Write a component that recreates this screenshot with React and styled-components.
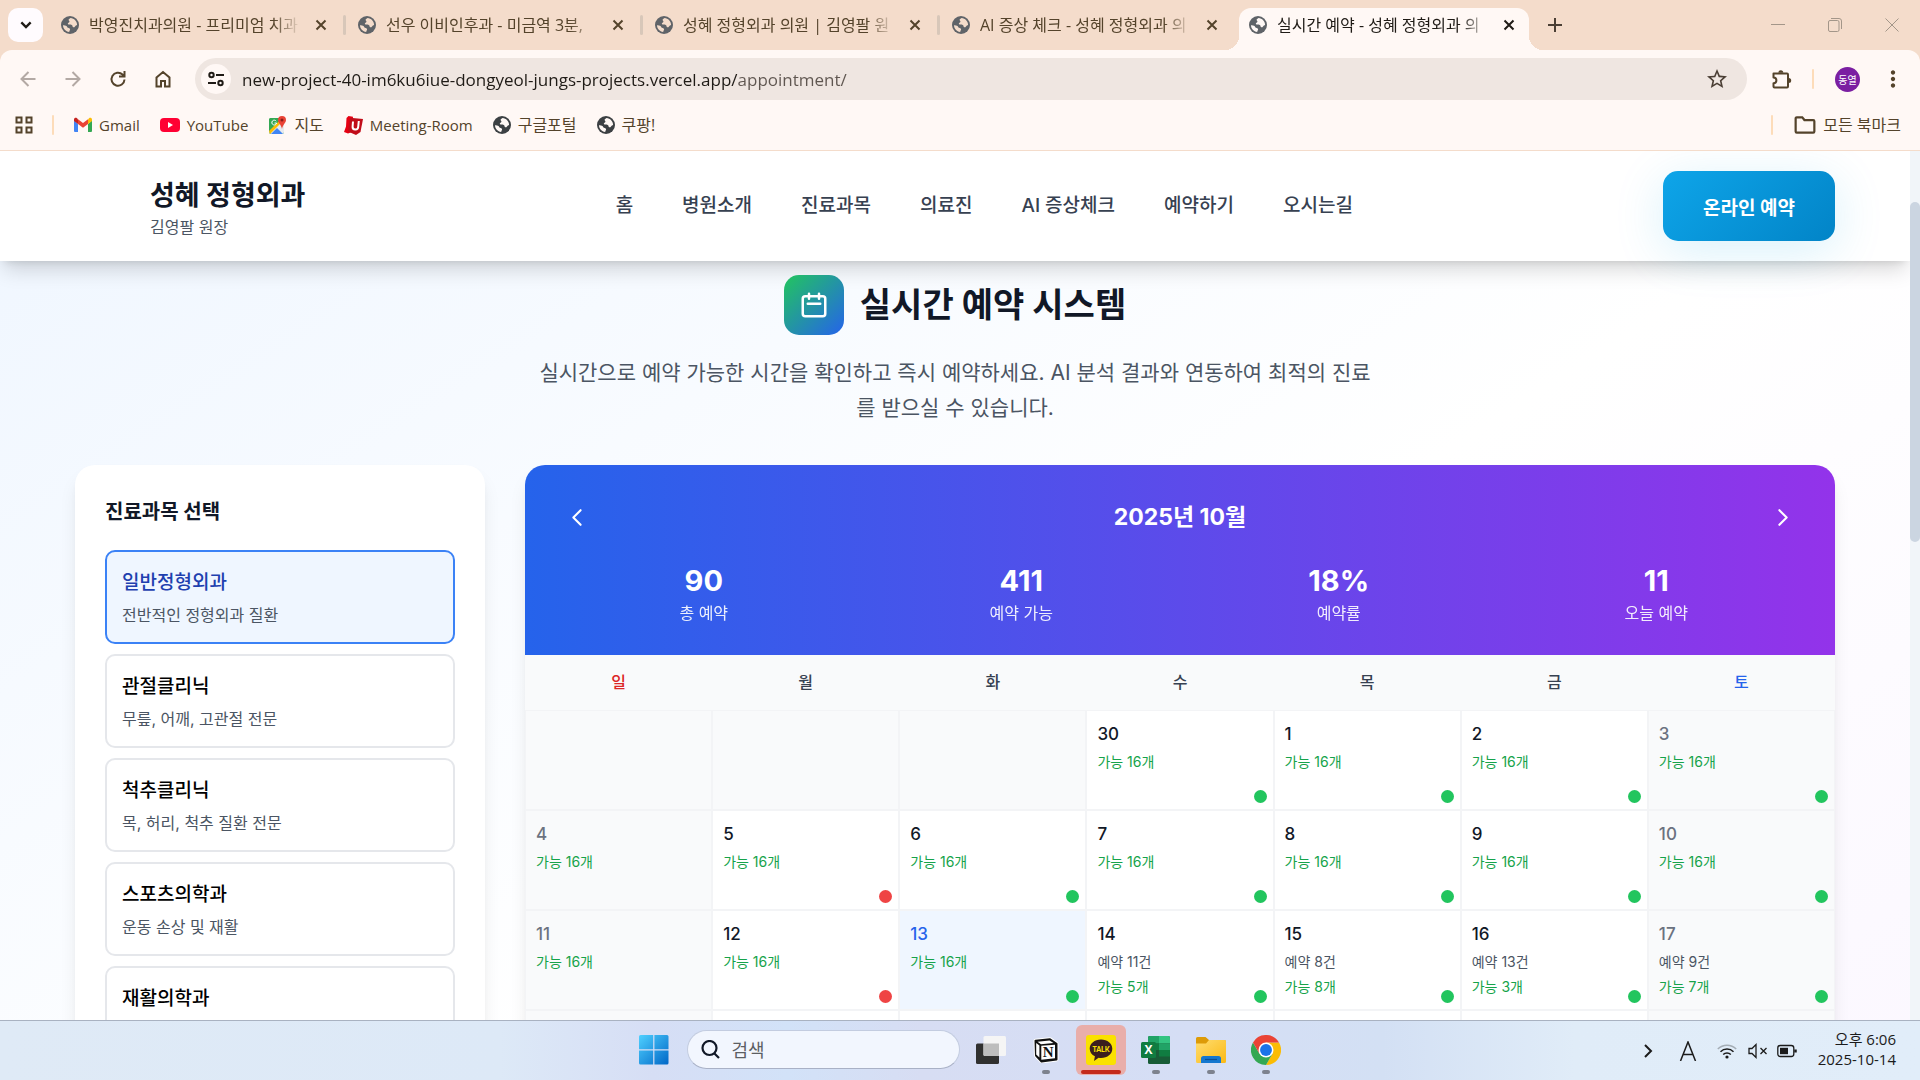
import React from "react";
import styled, { createGlobalStyle, css } from "styled-components";
import { MdStarBorder, MdMoreVert } from "react-icons/md";

const GlobalStyle = createGlobalStyle`
  *, *::before, *::after { box-sizing: border-box; }
  body {
    margin: 0;
    overflow: hidden;
    font-family: Inter, "Noto Sans CJK KR", sans-serif;
    color: #111827;
  }
  button, input { font: inherit; color: inherit; }
  button { border: 0; padding: 0; background: none; cursor: pointer; }
  a { color: inherit; text-decoration: none; }
  h1, h2, p { margin: 0; }
  svg { display: block; flex: none; }
`;

const chromeFont = css`font-family: "Open Sans", "Noto Sans CJK KR", sans-serif;`;

const Screen = styled.div`
  display: flex;
  flex-direction: column;
  height: 100vh;
`;

/* ---------- browser frame ---------- */

const Browser = styled.header`
  ${chromeFont}
  flex: none;
  background: #f4dccb;
`;

const TabStrip = styled.div`
  display: flex;
  align-items: flex-end;
  height: 50px;
  padding-left: 8px;
`;

const TabSearch = styled.button`
  align-self: center;
  display: grid;
  place-items: center;
  width: 35px;
  height: 34px;
  margin-right: 8px;
  border-radius: 10px;
  background: #fffbfe;
  color: #1f1b16;
`;

const Tab = styled.div`
  position: relative;
  display: flex;
  align-items: center;
  width: 290px;
  height: 42px;
  padding: 0 8px 8px 10px;
  border-radius: 12px 12px 0 0;
  font-size: 16px;
  color: ${(p) => (p.$active ? "#1f1b16" : "#54432b")};
  background: ${(p) => (p.$active ? "#fff8f5" : "transparent")};

  ${(p) => p.$active && css`
    &::before, &::after {
      content: "";
      position: absolute;
      bottom: 0;
      width: 14px;
      height: 14px;
    }
    &::before {
      right: 100%;
      background: radial-gradient(circle at 0 0, transparent 14px, #fff8f5 14px);
    }
    &::after {
      left: 100%;
      background: radial-gradient(circle at 100% 0, transparent 14px, #fff8f5 14px);
    }
  `}
`;

const TabTitle = styled.span`
  flex: 1;
  min-width: 0;
  margin: 0 8px 0 10px;
  overflow: hidden;
  white-space: nowrap;
  line-height: 24px;
  mask-image: linear-gradient(to right, #000 calc(100% - 28px), transparent);
`;

const TabClose = styled.button`
  display: grid;
  place-items: center;
  width: 24px;
  height: 24px;
`;

const TabDivider = styled.span`
  align-self: center;
  width: 3px;
  height: 20px;
  margin: 0 2px;
  border-radius: 2px;
  background: ${(p) => (p.$hidden ? "transparent" : "#d8c7b9")};
`;

const NewTab = styled.button`
  align-self: center;
  display: grid;
  place-items: center;
  width: 28px;
  height: 28px;
  margin-left: 12px;
  color: #4b3f35;
`;

const WindowControls = styled.div`
  align-self: center;
  display: flex;
  margin-left: auto;
  color: #a39689;
`;

const WindowButton = styled.button`
  display: grid;
  place-items: center;
  width: 57px;
  height: 40px;
`;

const ToolArea = styled.div`
  border-radius: 12px 12px 0 0;
  border-bottom: 1px solid #f4dccb;
  background: #fff8f5;
`;

const Toolbar = styled.div`
  display: flex;
  align-items: center;
  padding: 8px 5px 0;
`;

const ToolButton = styled.button`
  display: grid;
  place-items: center;
  width: 45px;
  height: 42px;
  color: ${(p) => (p.$muted ? "#b3a9a4" : "#54432b")};
`;

const AddressBar = styled.div`
  display: flex;
  flex: 1;
  align-items: center;
  height: 42px;
  margin: 0 12px 0 10px;
  padding: 0 18px 0 6px;
  border-radius: 21px;
  background: #efe6e1;
  color: #4b3f35;
`;

const SiteInfo = styled.button`
  display: grid;
  place-items: center;
  width: 30px;
  height: 30px;
  border-radius: 50%;
  background: #fff8f5;
  color: #1f1b16;
`;

const AddressInput = styled.input`
  flex: 1;
  min-width: 0;
  height: 30px;
  margin-left: 11px;
  padding: 0;
  border: 0;
  outline: 0;
  font-size: 17px;
  color: transparent;
  background: linear-gradient(to right, #1f1b16 495px, #5f5650 495px);
  background-clip: text;
`;

const Divider = styled.span`
  width: 2px;
  height: 20px;
  border-radius: 1px;
  background: #fddcb9;
  margin: ${(p) => p.$margin};
`;

const Avatar = styled.span`
  display: grid;
  place-items: center;
  width: 25px;
  height: 25px;
  border-radius: 50%;
  background: #7b1fa2;
  color: #fff;
  font-size: 10px;
`;

const BookmarkBar = styled.nav`
  display: flex;
  align-items: center;
  height: 50px;
  padding: 0 19px 0 15px;
  color: #54432b;
`;

const BookmarkList = styled.div`
  display: flex;
  flex: 1;
  gap: 20px;
`;

const Bookmark = styled.a`
  display: flex;
  align-items: center;
  gap: 7px;
  line-height: 24px;
  font-size: ${(p) => (p.$latin ? 15 : 16)}px;
  white-space: nowrap;
`;

/* ---------- clinic page ---------- */

const Viewport = styled.div`
  display: flex;
  flex: 1;
  min-height: 0;
`;

const Page = styled.div`
  flex: 1;
  min-width: 0;
  overflow: hidden;
  background: #faf5ff linear-gradient(to bottom right, #eff6ff, #ffffff, #faf5ff) 0 0 / 100% 1240px no-repeat;
`;

const ScrollTrack = styled.div`
  width: 10px;
  padding-top: 51px;
  background: #f1f5f9;
`;

const ScrollThumb = styled.div`
  height: 340px;
  border-radius: 5px;
  background: #cbd5e1;
`;

const SiteHeader = styled.div`
  background: #fff;
  box-shadow: 0 12px 20px -4px rgba(0, 0, 0, 0.16), 0 5px 8px -5px rgba(0, 0, 0, 0.12);
`;

const Container = styled.div`
  max-width: 1910px;
  margin: 0 auto;
  padding: 0 75px;
`;

const HeaderRow = styled(Container)`
  display: flex;
  align-items: center;
  justify-content: space-between;
  height: 110px;
`;

const Brand = styled.a`
  padding: 4px 0 0 75px;
  display: flex;
  flex-direction: column;
`;

const BrandName = styled.span`
  font-size: 27px;
  font-weight: 700;
  line-height: 38px;
`;

const BrandSub = styled.span`
  font-size: 16px;
  line-height: 25px;
  color: #4b5563;
`;

const SiteNav = styled.nav`
  display: flex;
  gap: 49px;
  font-size: 19px;
  font-weight: 500;
  line-height: 28px;
  color: #374151;
`;

const ReserveButton = styled.button`
  height: 70px;
  padding: 0 40px;
  border-radius: 15px;
  background: linear-gradient(135deg, #0ea5e9, #0284c7);
  box-shadow: 0 10px 50px rgba(14, 165, 233, 0.16);
  color: #fff;
  font-size: 19px;
  font-weight: 700;
`;

const Intro = styled.section`
  display: flex;
  flex-direction: column;
  align-items: center;
  gap: 20px;
  padding: 14px 0 40px;
`;

const IntroTitle = styled.h1`
  display: flex;
  align-items: center;
  gap: 16px;
  font-size: 34px;
  font-weight: 700;
  line-height: 60px;
`;

const IntroIcon = styled.span`
  display: grid;
  place-items: center;
  width: 60px;
  height: 60px;
  border-radius: 15px;
  background: linear-gradient(135deg, #22c55e, #2563eb);
  color: #fff;
`;

const IntroText = styled.p`
  max-width: 840px;
  font-size: 21px;
  line-height: 35px;
  text-align: center;
  color: #4b5563;
`;

const Columns = styled.div`
  display: grid;
  grid-template-columns: 410px minmax(0, 1fr);
  gap: 40px;
  align-items: start;
`;

const Card = styled.section`
  overflow: hidden;
  border-radius: 20px;
  background: #fff;
  box-shadow: 0 12px 20px -4px rgba(0, 0, 0, 0.1), 0 5px 8px -5px rgba(0, 0, 0, 0.1);
`;

const DepartmentCard = styled(Card)`
  padding: 30px;
`;

const CardTitle = styled.h2`
  margin-bottom: 20px;
  font-size: 20px;
  font-weight: 700;
  line-height: 35px;
`;

const DepartmentList = styled.div`
  display: flex;
  flex-direction: column;
  gap: 10px;
`;

const Department = styled.button`
  display: flex;
  flex-direction: column;
  gap: 5px;
  padding: 16px 15px 14px;
  border: 2px solid ${(p) => (p.$selected ? "#3b82f6" : "#e5e7eb")};
  border-radius: 10px;
  background: ${(p) => (p.$selected ? "#eff6ff" : "#fff")};
  color: ${(p) => (p.$selected ? "#1e40af" : "#000")};
  text-align: left;
`;

const DepartmentName = styled.span`
  font-size: 19px;
  font-weight: 500;
  line-height: 30px;
`;

const DepartmentNote = styled.span`
  font-size: 16px;
  line-height: 25px;
  color: #4b5563;
`;

const CalendarHead = styled.div`
  padding: 30px 30px 29px;
  background: linear-gradient(to right, #2563eb, #9333ea);
  color: #fff;
`;

const MonthRow = styled.div`
  display: flex;
  align-items: center;
  justify-content: space-between;
  margin-bottom: 21px;
`;

const MonthTitle = styled.h2`
  font-size: 23px;
  font-weight: 700;
  line-height: 35px;
`;

const MonthButton = styled.button`
  padding: 10px;
  border-radius: 10px;
`;

const Stats = styled.div`
  display: grid;
  grid-template-columns: repeat(4, 1fr);
  gap: 20px;
  text-align: center;
`;

const StatValue = styled.div`
  font-size: 29px;
  font-weight: 700;
  line-height: 40px;
`;

const StatLabel = styled.div`
  font-size: 16px;
  line-height: 25px;
  opacity: 0.9;
`;

const CalendarTable = styled.table`
  width: 100%;
  table-layout: fixed;
  border-collapse: separate;
  border-spacing: 0;
`;

const weekdayColors = { sun: "#dc2626", sat: "#2563eb" };

const Weekday = styled.th`
  height: 55px;
  padding: 0 0 3px;
  background: #f9fafb;
  font-size: 16px;
  font-weight: 500;
  color: ${(p) => weekdayColors[p.$kind] || "#374151"};
`;

const DayCell = styled.td`
  position: relative;
  height: 100px;
  padding: 11px 10px 0;
  border: 1px solid #f3f4f6;
  vertical-align: top;
  background: ${(p) => (p.$today ? "#eff6ff" : p.$muted ? "#f9fafb" : "#fff")};
`;

const DayNumber = styled.div`
  font-size: 17px;
  font-weight: 500;
  line-height: 25px;
  color: ${(p) => (p.$today ? "#2563eb" : p.$muted ? "#6b7280" : "#111827")};
`;

const DayLine = styled.div`
  margin-top: 4px;
  font-size: 14px;
  line-height: 21px;
  color: ${(p) => (p.$booked ? "#4b5563" : "#16a34a")};
`;

const StatusDot = styled.span`
  position: absolute;
  right: 6px;
  bottom: 6px;
  width: 13px;
  height: 13px;
  border-radius: 50%;
  background: ${(p) => (p.$color === "red" ? "#ef4444" : "#22c55e")};
`;

/* ---------- taskbar ---------- */

const Taskbar = styled.footer`
  ${chromeFont}
  display: grid;
  grid-template-columns: 1fr auto 1fr;
  flex: none;
  height: 60px;
  border-top: 1px solid #a9b2c1;
  background: linear-gradient(to right, #dfeaf6 0%, #dde9f7 26%, #d6def5 34%, #d2e2f8 41%, #d7ddf3 48%, #d5def5 62%, #d3e0f4 72%, #e0ecf8 82%, #e1edf9 100%);
`;

const TaskCenter = styled.div`
  grid-column: 2;
  display: flex;
  align-items: center;
  padding-bottom: 2px;
`;

const TaskSlot = styled.button`
  position: relative;
  display: grid;
  place-items: center;
  width: 55px;
  height: 57px;

  &::after {
    content: "";
    position: absolute;
    bottom: 4px;
    width: ${(p) => (p.$alert ? 40 : 8)}px;
    height: 4px;
    border-radius: 2px;
    background: ${(p) => (p.$alert ? "#c42b1c" : p.$running ? "#7d828e" : "transparent")};
  }
`;

const AlertTile = styled.span`
  display: grid;
  place-items: center;
  width: 50px;
  height: 50px;
  border-radius: 6px;
  background: #e9aeaa;
`;

const TaskSearch = styled.label`
  display: flex;
  align-items: center;
  gap: 12px;
  width: 273px;
  height: 39px;
  margin: 0 4px 0 5px;
  padding: 0 13px;
  border: 1px solid #c3cce0;
  border-bottom-color: #a9b1c6;
  border-radius: 20px;
  background: #f2f6fe;
`;

const TaskSearchInput = styled.input`
  flex: 1;
  min-width: 0;
  padding: 0;
  border: 0;
  outline: 0;
  background: none;
  font-size: 18px;

  &::placeholder { color: #5c5e63; opacity: 1; }
`;

const Tray = styled.div`
  display: flex;
  align-items: center;
  justify-content: flex-end;
  padding-right: 24px;
  color: #1b1b1b;
`;

const TrayButton = styled.button`
  display: grid;
  place-items: center;
  width: ${(p) => p.$width}px;
  height: 48px;
`;

const Clock = styled.div`
  margin-left: 14px;
  padding-bottom: 4px;
  font-size: 15px;
  line-height: 20px;
  text-align: right;
`;

/* ---------- drawings ---------- */

const Stroke = ({ size = 20, box = 24, width = 2, children, ...rest }) => (
  <svg width={size} height={size} viewBox={`0 0 ${box} ${box}`} fill="none" stroke="currentColor" strokeWidth={width} aria-hidden="true" {...rest}>
    {children}
  </svg>
);

const GlobeIcon = ({ color, land }) => (
  <svg width="18" height="18" viewBox="0 0 18 18" aria-hidden="true">
    <circle cx="9" cy="9" r="9" fill={color} />
    <path d="M9.500 2C8 2.800 7 3.800 8 4.800c1 .8.200 1.600-.8 2.200-.9.700-.2 1.600 1.200 1.600 2 0 3.200.6 3.200 1.800 0 1 1.800 1.200 2.400 0 .5-.9 1.200-1.400 2.100-1.500C16 5.200 13.200 2.200 9.500 2z" fill={land} />
    <path d="M2 9.300c1.800-.3 3.800.4 4.300 1.900.3.800 2.800.5 2.800 2 0 1-.8 1.500-.9 2.800C4.800 15.700 2 12.800 2 9.300z" fill={land} />
  </svg>
);

const PuzzleIcon = () => (
  <Stroke size={22} box={22}>
    <path d="M2.500 5.500h13.500a1 1 0 0 1 1 1V18.500a1 1 0 0 1-1 1H3.500a1 1 0 0 1-1-1v-3.300a2.900 2.900 0 0 0 0-5.800z" strokeLinejoin="round" />
    <path d="M7.300 4.800a2.500 2.500 0 0 1 5 0zM17.700 10a2.500 2.500 0 0 1 0 5z" fill="currentColor" stroke="none" />
  </Stroke>
);

const GmailIcon = () => (
  <svg width="18" height="18" viewBox="0 0 18 18" aria-hidden="true">
    <path d="M0 4.5V15a1 1 0 0 0 1 1h3V8z" fill="#4285f4" />
    <path d="M18 4.5V15a1 1 0 0 1-1 1h-3V8z" fill="#34a853" />
    <path d="M14 3.4V8l4-3V3.6C18 2 16.200 1.300 15 2.200z" fill="#fbbc04" />
    <path d="M4 8V3.200l5 3.800 5-3.800V8l-5 3.800z" fill="#ea4335" />
    <path d="M0 3.600V5l4 3V3.200L3 2.300C1.800 1.300 0 2 0 3.600z" fill="#c5221f" />
  </svg>
);

const YouTubeIcon = () => (
  <svg width="20" height="16" viewBox="0 0 20 16" aria-hidden="true">
    <rect y="1" width="20" height="14" rx="4" fill="#ff0033" />
    <path d="M8 5l5 3-5 3z" fill="#fff" />
  </svg>
);

const MapsIcon = () => (
  <svg width="19" height="19" viewBox="0 0 19 19" aria-hidden="true">
    <rect x="1" y="2" width="15" height="16" rx="2" fill="#34a853" />
    <path d="M1 16L14 4l2 3v9a2 2 0 0 1-2 2H3z" fill="#e8eaed" />
    <path d="M3 18l6-6 6 6z" fill="#4285f4" />
    <path d="M1 15L12 4l2 2L2 18z" fill="#fbbc04" />
    <path d="M1 4a2 2 0 0 1 2-2h9v2L1 14z" fill="#34a853" />
    <path d="M8.200 5.200A2.400 2.400 0 1 0 8.600 7H6.500" fill="none" stroke="#fff" strokeWidth="1" />
    <path d="M14 0a4 4 0 0 1 4 4c0 3-3 4-4 9-1-5-4-6-4-9a4 4 0 0 1 4-4z" fill="#ea4335" />
    <circle cx="14" cy="4" r="1.500" fill="#8c1d18" />
  </svg>
);

const MeetingIcon = () => (
  <svg width="19" height="19" viewBox="0 0 19 19" aria-hidden="true">
    <path d="M4.500 0L9 .8 8 16l-4 1.500L0 16l2-5.500L2.500 2z" fill="#e60012" />
    <path d="M6 1.800L19 3l-2.500 13-4.500 3-8-3.500z" fill="#c10d19" />
    <path d="M9 5.500l-.4 5a2.800 2.800 0 0 0 5.600.5l.6-6" fill="none" stroke="#fff" strokeWidth="2" />
  </svg>
);

const WindowsIcon = () => (
  <svg width="30" height="30" viewBox="0 0 30 30" aria-hidden="true">
    <defs>
      <linearGradient id="win" x1="0" y1="0" x2="1" y2="1" gradientUnits="objectBoundingBox">
        <stop offset="0" stopColor="#4fd0ff" />
        <stop offset="1" stopColor="#0067c7" />
      </linearGradient>
    </defs>
    <path fill="url(#win)" d="M1.500 0H14.200V14.200H0V1.500A1.500 1.500 0 0 1 1.500 0zM15.400 0H28A1.500 1.500 0 0 1 29.500 1.500V14.200H15.400zM0 15.400H14.200V29.500H1.500A1.500 1.500 0 0 1 0 28zM15.400 15.400H29.500V28A1.500 1.500 0 0 1 28 29.500H15.400z" />
  </svg>
);

const TaskViewIcon = () => (
  <svg width="30" height="30" viewBox="0 0 30 30" aria-hidden="true">
    <rect x="0" y="8.500" width="23" height="20.500" rx="1.500" fill="#30302f" />
    <rect x="7.500" y="1" width="22.500" height="20" rx="1.500" fill="#f5f5f5" />
    <path d="M7.500 8.500H23V21H9a1.500 1.500 0 0 1-1.500-1.500z" fill="#bdbdbd" />
  </svg>
);

const NotionIcon = () => (
  <svg width="26" height="26" viewBox="0 0 26 26" aria-hidden="true">
    <path d="M2.500 3.800L17 2.200l6.500 4.600V22.500L8.500 24.500 3 18.500z" fill="#fff" stroke="#fff" strokeWidth="4" strokeLinejoin="round" />
    <path d="M2.500 3.800L17 2.200l6.500 4.600V22.500L8.500 24.500 3 18.500z" fill="#111" stroke="#111" strokeWidth="2" strokeLinejoin="round" />
    <path d="M4.500 4.700l12-1.200 4 2.600L8 7.300z" fill="#fff" />
    <path d="M3.200 6l3.200 2.600v12L3.200 17.500z" fill="#fff" />
    <path d="M8.300 8.800l13.700-1v13.500l-13.700 1.500z" fill="#fff" />
    <text x="15.100" y="20.200" textAnchor="middle" fontSize="15" fontWeight="700" fill="#111" fontFamily='"Liberation Serif", serif'>N</text>
  </svg>
);

const TalkIcon = () => (
  <svg width="30" height="30" viewBox="0 0 30 30" aria-hidden="true">
    <rect width="30" height="30" rx="3" fill="#fae100" />
    <path d="M15 4.500c6.500 0 11.300 4 11.300 9.200S21.500 23 15 23c-1 0-1.600 0-2.400-.2L8 26l.9-4.700C5.700 19.800 3.700 17 3.700 13.700 3.700 8.500 8.500 4.500 15 4.500z" fill="#3b1e1e" />
    <text x="15" y="16.800" textAnchor="middle" fontSize="7" fontWeight="900" fill="#fae100" fontFamily="Lato, sans-serif">TALK</text>
  </svg>
);

const ExcelIcon = () => (
  <svg width="30" height="30" viewBox="0 0 30 30" aria-hidden="true">
    <rect x="7" y="1" width="22" height="28" rx="1.500" fill="#185c37" />
    <path d="M7 2.500A1.500 1.500 0 0 1 8.500 1H18v7.500H7z" fill="#21a366" />
    <path d="M18 1h9.500A1.500 1.500 0 0 1 29 2.500v6H18z" fill="#33c481" />
    <path d="M7 8.500h11V15H7z" fill="#107c41" />
    <path d="M18 8.500h11V15H18z" fill="#21a366" />
    <path d="M18 15h11v6.500H18z" fill="#107c41" />
    <rect x="0" y="7" width="15" height="16" rx="1.500" fill="#107c41" />
    <text x="7.500" y="19.200" textAnchor="middle" fontSize="12" fontWeight="700" fill="#fff" fontFamily='"Open Sans", sans-serif'>X</text>
  </svg>
);

const FolderAppIcon = () => (
  <svg width="30" height="30" viewBox="0 0 30 30" aria-hidden="true">
    <defs>
      <linearGradient id="fold" x1="0" y1="0" x2="1" y2="1">
        <stop offset="0" stopColor="#ffdd70" />
        <stop offset="1" stopColor="#fbb914" />
      </linearGradient>
    </defs>
    <path d="M0 3.500A1.500 1.500 0 0 1 1.500 2h8l3.500 3h15.500A1.500 1.500 0 0 1 30 6.500V12H0z" fill="#dd9b07" />
    <path d="M0 8.500h10l3-3.500h15.500A1.500 1.500 0 0 1 30 6.500v20a1.500 1.500 0 0 1-1.500 1.500h-27A1.500 1.500 0 0 1 0 26.500z" fill="url(#fold)" />
    <path d="M5 28v-4.500A2.500 2.500 0 0 1 7.500 21h15a2.500 2.500 0 0 1 2.500 2.500V28z" fill="#1577cf" />
    <path d="M9 24.500h12" stroke="#0b4f96" strokeWidth="1.200" />
  </svg>
);

const ChromeIcon = () => (
  <svg width="30" height="30" viewBox="0 0 48 48" aria-hidden="true">
    <path d="M44.800 12A24 24 0 0 1 24 48l10.400-18L24 12z" fill="#fbbc04" />
    <path d="M3.200 12A24 24 0 0 0 24 48l10.400-18H13.600z" fill="#34a853" />
    <path d="M24 12h20.800A24 24 0 0 0 3.200 12l10.400 18z" fill="#ea4335" />
    <circle cx="24" cy="24" r="12" fill="#fff" />
    <circle cx="24" cy="24" r="9.500" fill="#1a73e8" />
  </svg>
);

/* ---------- data ---------- */

const tabs = [
  "박영진치과의원 - 프리미엄 치과",
  "선우 이비인후과 - 미금역 3분,",
  "성혜 정형외과 의원 | 김영팔 원",
  "AI 증상 체크 - 성혜 정형외과 의",
  "실시간 예약 - 성혜 정형외과 의",
];

const bookmarks = [
  { label: "Gmail", icon: <GmailIcon />, latin: true },
  { label: "YouTube", icon: <YouTubeIcon />, latin: true },
  { label: "지도", icon: <MapsIcon /> },
  { label: "Meeting-Room", icon: <MeetingIcon />, latin: true },
  { label: "구글포털", icon: <GlobeIcon color="#3c4043" land="#fff8f5" /> },
  { label: "쿠팡!", icon: <GlobeIcon color="#3c4043" land="#fff8f5" /> },
];

const menu = ["홈", "병원소개", "진료과목", "의료진", "AI 증상체크", "예약하기", "오시는길"];

const departments = [
  ["일반정형외과", "전반적인 정형외과 질환"],
  ["관절클리닉", "무릎, 어깨, 고관절 전문"],
  ["척추클리닉", "목, 허리, 척추 질환 전문"],
  ["스포츠의학과", "운동 손상 및 재활"],
  ["재활의학과", ""],
];

const stats = [
  ["90", "총 예약"],
  ["411", "예약 가능"],
  ["18%", "예약률"],
  ["11", "오늘 예약"],
];

const weekdays = [["일", "sun"], ["월"], ["화"], ["수"], ["목"], ["금"], ["토", "sat"]];

const day = (n, free = 16, dot = "green", booked = 0, flags = {}) => ({ n, free, dot, booked, ...flags });
const blank = { muted: true };
const off = { muted: true };

const weeks = [
  [blank, blank, blank, day(30), day(1), day(2), day(3, 16, "green", 0, off)],
  [day(4, 16, null, 0, off), day(5, 16, "red"), day(6), day(7), day(8), day(9), day(10, 16, "green", 0, off)],
  [
    day(11, 16, null, 0, off),
    day(12, 16, "red"),
    day(13, 16, "green", 0, { today: true }),
    day(14, 5, "green", 11),
    day(15, 8, "green", 8),
    day(16, 3, "green", 13),
    day(17, 7, "green", 9, off),
  ],
  [blank, {}, {}, {}, {}, {}, blank],
];

/* ---------- views ---------- */

const BrowserChrome = () => (
  <Browser>
    <TabStrip>
      <TabSearch aria-label="탭 검색">
        <Stroke size={16} width={3.500}><path d="M5 8l7 7 7-7" /></Stroke>
      </TabSearch>
      {tabs.map((title, i) => (
        <React.Fragment key={title}>
          <Tab $active={i === 4}>
            <GlobeIcon color="#5f6368" land={i === 4 ? "#fff8f5" : "#f4dccb"} />
            <TabTitle>{title}</TabTitle>
            <TabClose aria-label="탭 닫기">
              <Stroke size={12} box={12} width={2}><path d="M1.500 1.500l9 9M10.500 1.500l-9 9" /></Stroke>
            </TabClose>
          </Tab>
          {i < 4 && <TabDivider $hidden={i === 3} />}
        </React.Fragment>
      ))}
      <NewTab aria-label="새 탭">
        <Stroke size={14} box={14} width={2}><path d="M7 0v14M0 7h14" /></Stroke>
      </NewTab>
      <WindowControls>
        <WindowButton aria-label="최소화"><Stroke size={14} box={14} width={1}><path d="M0 6.500h14" /></Stroke></WindowButton>
        <WindowButton aria-label="이전 크기로">
          <Stroke size={14} box={14} width={1}><rect x="0.500" y="2.500" width="10.500" height="11" rx="1.500" /><path d="M3 .5h8a2.500 2.500 0 0 1 2.500 2.500v8" /></Stroke>
        </WindowButton>
        <WindowButton aria-label="닫기"><Stroke size={14} box={14} width={1}><path d="M.5.5l13 13M13.500.5l-13 13" /></Stroke></WindowButton>
      </WindowControls>
    </TabStrip>
    <ToolArea>
      <Toolbar>
        <ToolButton $muted aria-label="뒤로"><Stroke size={16} box={16}><path d="M15.500 8H2M8.500 1L1.500 8l7 7" /></Stroke></ToolButton>
        <ToolButton $muted aria-label="앞으로"><Stroke size={16} box={16}><path d="M.5 8H14M7.500 1l7 7-7 7" /></Stroke></ToolButton>
        <ToolButton aria-label="새로고침">
          <Stroke size={18} box={18}><path d="M15.500 9.500A6.500 6.500 0 1 1 13.500 4.500L15 6M15.500 1v5.500H10" /></Stroke>
        </ToolButton>
        <ToolButton aria-label="홈">
          <Stroke size={18} box={18}><path d="M2.500 7.500L9 2l6.500 5.500V16.500h-4.500V11H7v5.500H2.500z" /></Stroke>
        </ToolButton>
        <AddressBar>
          <SiteInfo aria-label="사이트 정보">
            <Stroke size={16} box={16}><circle cx="3.500" cy="4" r="2.200" /><path d="M8 4h8M0 12h8" /><circle cx="12.500" cy="12" r="2.200" /></Stroke>
          </SiteInfo>
          <AddressInput aria-label="주소" spellCheck={false} defaultValue="new-project-40-im6ku6iue-dongyeol-jungs-projects.vercel.app/appointment/" />
          <MdStarBorder size={24} />
        </AddressBar>
        <ToolButton aria-label="확장 프로그램"><PuzzleIcon /></ToolButton>
        <Divider $margin="0 11px 0 8px" />
        <ToolButton aria-label="프로필"><Avatar>동열</Avatar></ToolButton>
        <ToolButton aria-label="메뉴"><MdMoreVert size={26} /></ToolButton>
      </Toolbar>
      <BookmarkBar>
        <Stroke size={18} box={18}>
          <path d="M1.500 1.500h5v5h-5zM11.500 1.500h5v5h-5zM1.500 11.500h5v5h-5zM11.500 11.500h5v5h-5z" />
        </Stroke>
        <Divider $margin="0 20px 0 19px" />
        <BookmarkList>
          {bookmarks.map((b) => (
            <Bookmark key={b.label} href="#" $latin={b.latin}>{b.icon}{b.label}</Bookmark>
          ))}
        </BookmarkList>
        <Divider $margin="0 21px 0 0" />
        <Bookmark href="#">
          <Stroke size={22} box={20}><path d="M1.500 4a1 1 0 0 1 1-1h5l2 2.500h8a1 1 0 0 1 1 1V16a1 1 0 0 1-1 1h-15a1 1 0 0 1-1-1z" /></Stroke>
          모든 북마크
        </Bookmark>
      </BookmarkBar>
    </ToolArea>
  </Browser>
);

const Calendar = () => (
  <Card>
    <CalendarHead>
      <MonthRow>
        <MonthButton aria-label="이전 달">
          <Stroke size={25} strokeLinecap="round" strokeLinejoin="round"><path d="M15 19l-7-7 7-7" /></Stroke>
        </MonthButton>
        <MonthTitle>2025년 10월</MonthTitle>
        <MonthButton aria-label="다음 달">
          <Stroke size={25} strokeLinecap="round" strokeLinejoin="round"><path d="M9 5l7 7-7 7" /></Stroke>
        </MonthButton>
      </MonthRow>
      <Stats>
        {stats.map(([value, label]) => (
          <div key={label}>
            <StatValue>{value}</StatValue>
            <StatLabel>{label}</StatLabel>
          </div>
        ))}
      </Stats>
    </CalendarHead>
    <CalendarTable>
      <thead>
        <tr>{weekdays.map(([name, kind]) => <Weekday key={name} scope="col" $kind={kind}>{name}</Weekday>)}</tr>
      </thead>
      <tbody>
        {weeks.map((week, w) => (
          <tr key={w}>
            {week.map((d, i) => (
              <DayCell key={i} $muted={d.muted} $today={d.today}>
                {d.n && (
                  <>
                    <DayNumber $muted={d.muted} $today={d.today}>{d.n}</DayNumber>
                    {d.booked > 0 && <DayLine $booked>{`예약 ${d.booked}건`}</DayLine>}
                    <DayLine>{`가능 ${d.free}개`}</DayLine>
                    {d.dot && <StatusDot $color={d.dot} />}
                  </>
                )}
              </DayCell>
            ))}
          </tr>
        ))}
      </tbody>
    </CalendarTable>
  </Card>
);

const ClinicPage = () => (
  <Viewport>
    <Page>
      <SiteHeader>
        <HeaderRow>
          <Brand href="#">
            <BrandName>성혜 정형외과</BrandName>
            <BrandSub>김영팔 원장</BrandSub>
          </Brand>
          <SiteNav>{menu.map((m) => <a key={m} href="#">{m}</a>)}</SiteNav>
          <ReserveButton>온라인 예약</ReserveButton>
        </HeaderRow>
      </SiteHeader>
      <Container>
        <Intro>
          <IntroTitle>
            <IntroIcon>
              <Stroke size={30} strokeLinecap="round" strokeLinejoin="round">
                <path d="M8 7V3m8 4V3m-9 8h10M5 21h14a2 2 0 002-2V7a2 2 0 00-2-2H5a2 2 0 00-2 2v12a2 2 0 002 2z" />
              </Stroke>
            </IntroIcon>
            실시간 예약 시스템
          </IntroTitle>
          <IntroText>
            실시간으로 예약 가능한 시간을 확인하고 즉시 예약하세요. AI 분석 결과와 연동하여 최적의 진료를 받으실 수 있습니다.
          </IntroText>
        </Intro>
        <Columns>
          <DepartmentCard>
            <CardTitle>진료과목 선택</CardTitle>
            <DepartmentList>
              {departments.map(([name, note], i) => (
                <Department key={name} $selected={i === 0}>
                  <DepartmentName>{name}</DepartmentName>
                  <DepartmentNote>{note}</DepartmentNote>
                </Department>
              ))}
            </DepartmentList>
          </DepartmentCard>
          <Calendar />
        </Columns>
      </Container>
    </Page>
    <ScrollTrack><ScrollThumb /></ScrollTrack>
  </Viewport>
);

const WindowsTaskbar = () => (
  <Taskbar>
    <TaskCenter>
      <TaskSlot aria-label="시작"><WindowsIcon /></TaskSlot>
      <TaskSearch>
        <Stroke size={19} box={19} width={2.200}><circle cx="8.500" cy="8" r="7" /><path d="M13 13l5 5" /></Stroke>
        <TaskSearchInput type="text" aria-label="검색" placeholder="검색" />
      </TaskSearch>
      <TaskSlot aria-label="작업 보기"><TaskViewIcon /></TaskSlot>
      <TaskSlot $running aria-label="Notion"><NotionIcon /></TaskSlot>
      <TaskSlot $alert aria-label="KakaoTalk"><AlertTile><TalkIcon /></AlertTile></TaskSlot>
      <TaskSlot $running aria-label="Excel"><ExcelIcon /></TaskSlot>
      <TaskSlot $running aria-label="파일 탐색기"><FolderAppIcon /></TaskSlot>
      <TaskSlot $running aria-label="Chrome"><ChromeIcon /></TaskSlot>
    </TaskCenter>
    <Tray>
      <TrayButton $width={40} aria-label="숨겨진 아이콘">
        <Stroke size={14} box={14} width={2}><path d="M4 1l6 6-6 6" /></Stroke>
      </TrayButton>
      <TrayButton $width={40} aria-label="입력기">
        <Stroke size={20} box={20} width={1.500}><path d="M2.500 20L10 1l7.500 19M5 13.500h10" /></Stroke>
      </TrayButton>
      <TrayButton $width={38} aria-label="네트워크">
        <Stroke size={20} box={20} width={1.500}>
          <path d="M.8 8a13 13 0 0 1 18.400 0" opacity=".3" />
          <path d="M3.500 10.800a9.200 9.200 0 0 1 13 0M6.200 13.500a5.400 5.400 0 0 1 7.600 0" />
          <circle cx="10" cy="16" r="1.600" fill="currentColor" stroke="none" />
        </Stroke>
      </TrayButton>
      <TrayButton $width={24} aria-label="음소거">
        <Stroke size={20} box={20} width={1.300}><path d="M1 7.500h3l4-4v13l-4-4H1zM12.500 7l6 6M18.500 7l-6 6" /></Stroke>
      </TrayButton>
      <TrayButton $width={34} aria-label="배터리">
        <Stroke size={20} box={20} width={1.300}>
          <rect x=".8" y="4.500" width="16" height="11" rx="2.500" />
          <rect x="3" y="6.800" width="8" height="6.400" fill="currentColor" stroke="none" />
          <path d="M18.500 8.500v3" strokeWidth="2.500" />
        </Stroke>
      </TrayButton>
      <Clock>오후 6:06<br />2025-10-14</Clock>
    </Tray>
  </Taskbar>
);

export default function App() {
  return (
    <Screen>
      <GlobalStyle />
      <BrowserChrome />
      <ClinicPage />
      <WindowsTaskbar />
    </Screen>
  );
}
